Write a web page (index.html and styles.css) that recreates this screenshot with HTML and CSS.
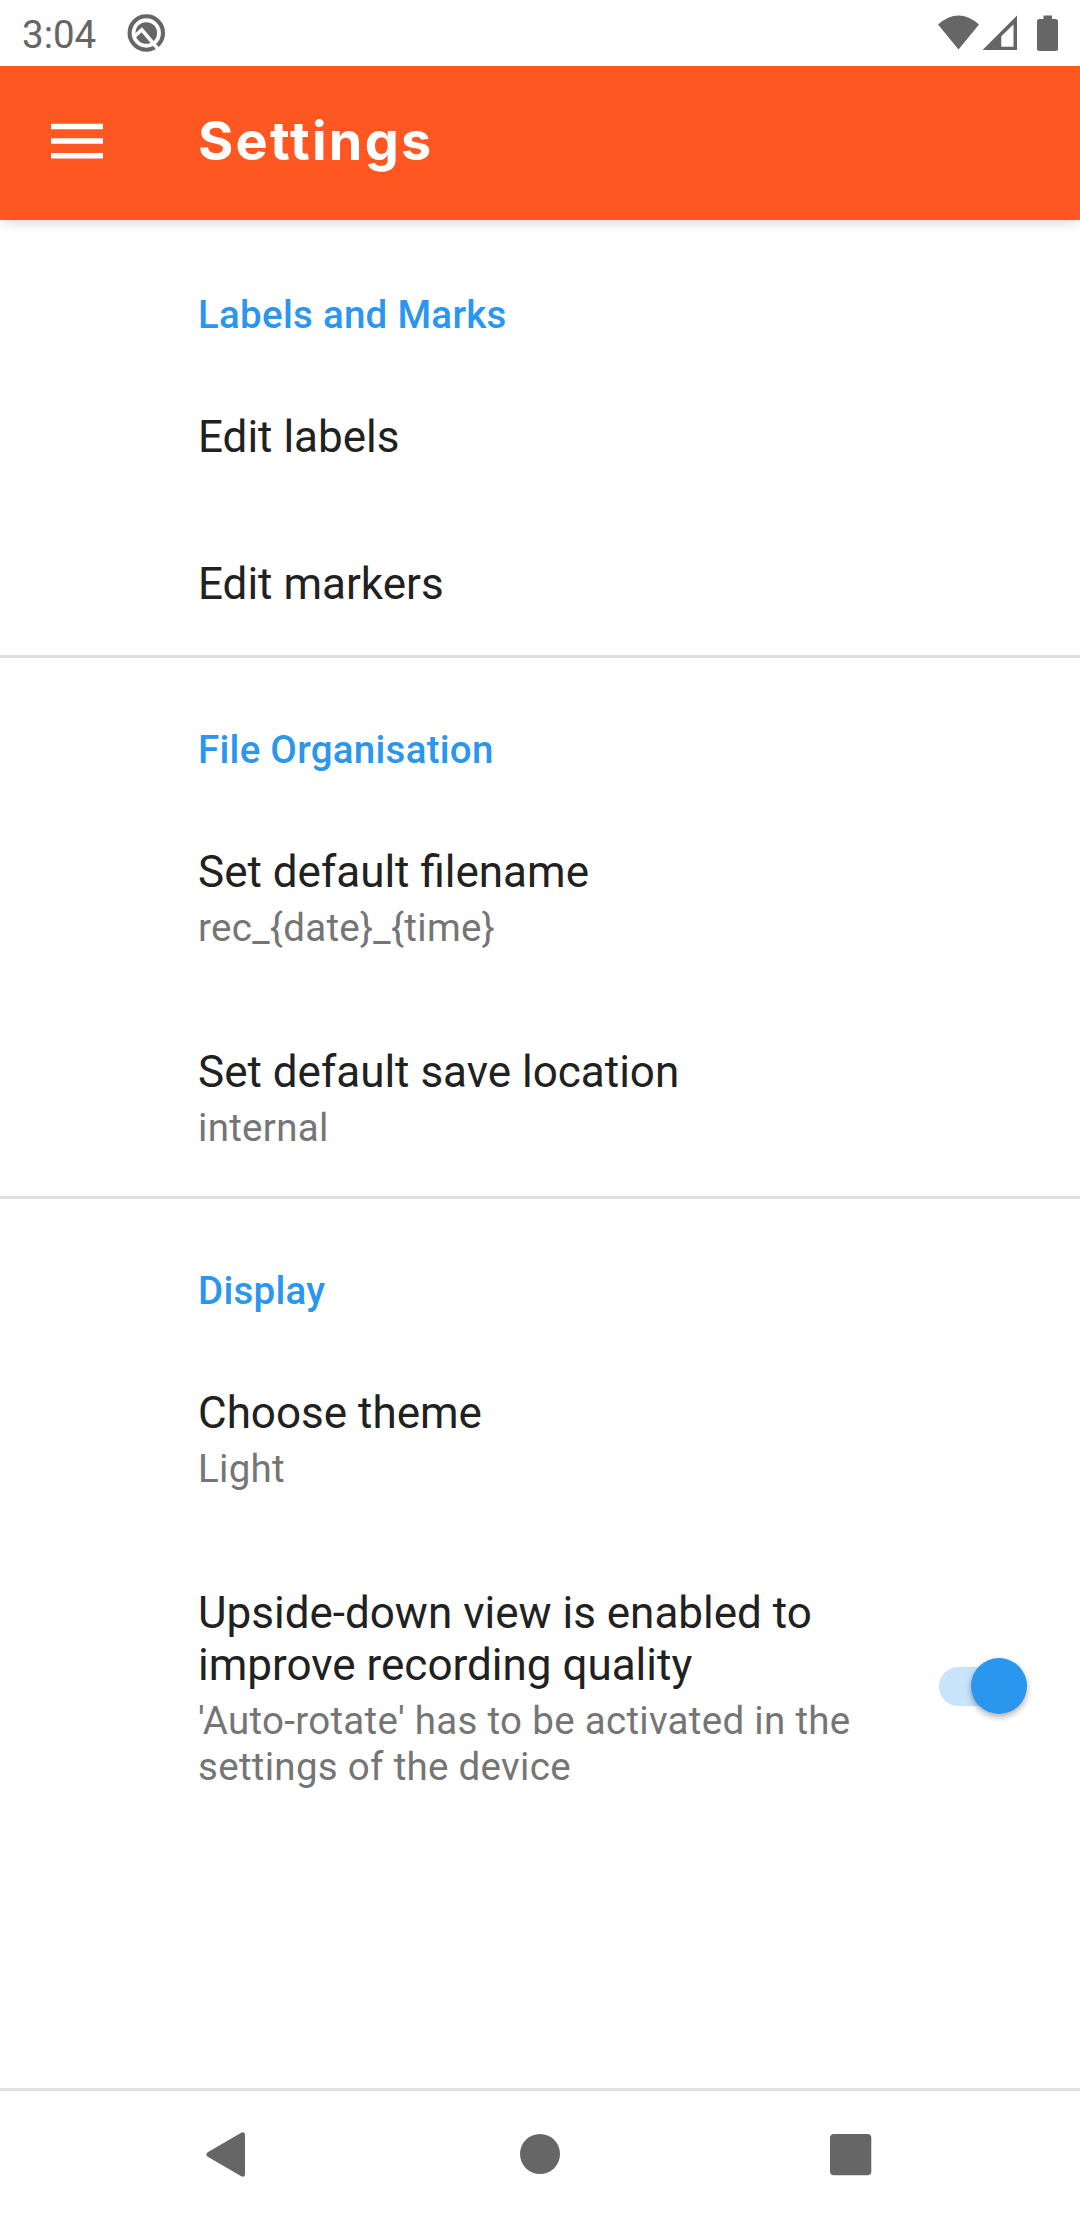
FILE: index.html
```html
<!DOCTYPE html>
<html lang="en">
<head>
<meta charset="utf-8">
<title>Settings</title>
<link rel="stylesheet" href="styles.css">
</head>
<body>
<div class="screen">
  <div class="status-bar">
    <span class="clock">3:04</span>
    <svg class="q-icon" width="40" height="40" viewBox="0 0 40 40">
      <circle cx="20.300" cy="20" r="16.700" fill="none" stroke="#666" stroke-width="4.100"/>
      <circle cx="20.300" cy="20" r="10.800" fill="#666"/>
      <path d="M8.800 23 15.800 16.800 32.200 36.200" fill="none" stroke="#fff" stroke-width="3.600"/>
    </svg>
    <svg class="system-icons" width="122" height="38" viewBox="0 0 122 38" fill="#666">
      <path d="M0 9.500Q20.500 -8.500 41 9.500L20.500 34.500Z"/>
      <path fill-rule="evenodd" d="M44.500 35 79 .5V35ZM63.300 31.800H75.500V9.500L63.300 21.300Z"/>
      <path d="M105.500 .5H114V4H117.500Q120 4 120 6.500V33.500Q120 36 117.500 36H101.500Q99 36 99 33.500V6.500Q99 4 101.500 4H105.500Z"/>
    </svg>
  </div>
  <header class="app-bar">
    <svg class="menu-icon" width="52" height="36" viewBox="0 0 52 36" fill="#fff">
      <path d="M0 .7H52V6.300H0ZM0 15.200H52V20.800H0ZM0 29.900H52V35.500H0Z"/>
    </svg>
    <h1 class="app-title">Settings</h1>
  </header>
  <main class="settings">
    <section class="group">
      <h2 class="group-title">Labels and Marks</h2>
      <div class="item"><div class="item-title">Edit labels</div></div>
      <div class="item"><div class="item-title">Edit markers</div></div>
    </section>
    <section class="group">
      <h2 class="group-title">File Organisation</h2>
      <div class="item">
        <div class="item-title">Set default filename</div>
        <div class="item-summary">rec_{date}_{time}</div>
      </div>
      <div class="item">
        <div class="item-title">Set default save location</div>
        <div class="item-summary">internal</div>
      </div>
    </section>
    <section class="group">
      <h2 class="group-title">Display</h2>
      <div class="item">
        <div class="item-title">Choose theme</div>
        <div class="item-summary">Light</div>
      </div>
      <div class="switch-row">
        <div class="item">
          <div class="item-title">Upside-down view is enabled to<br>improve recording quality</div>
          <div class="item-summary">'Auto-rotate' has to be activated in the<br>settings of the device</div>
        </div>
        <div class="switch"><div class="thumb"></div></div>
      </div>
    </section>
  </main>
  <nav class="nav-bar">
    <svg class="nav-icon" width="48" height="48" viewBox="0 0 48 48"><path d="M7 24.500 40.500 4.800V44.200Z" fill="#666" stroke="#666" stroke-width="5" stroke-linejoin="round"/></svg>
    <svg class="nav-icon" width="48" height="48" viewBox="0 0 48 48"><circle cx="24" cy="24" r="20" fill="#666"/></svg>
    <svg class="nav-icon" width="48" height="48" viewBox="0 0 48 48"><rect x="0" y="4" width="41.300" height="41.300" rx="4" fill="#666"/></svg>
  </nav>
</div>
</body>
</html>
```
FILE: styles.css
```css
* {
  box-sizing: border-box;
}

body {
  margin: 0;
  background: #fff;
  font-family: Roboto, sans-serif;
}

.screen {
  display: flex;
  flex-direction: column;
  width: 1080px;
  height: 2220px;
  overflow: hidden;
}

.status-bar {
  display: flex;
  align-items: flex-start;
  height: 66px;
  padding: 12px 22px 0;
  color: #666;
}

.clock {
  width: 104px;
  font-size: 38.5px;
  line-height: 45px;
}

.q-icon {
  margin-top: 1px;
}

.system-icons {
  margin: 3px -2px 0 auto;
}

.app-bar {
  display: flex;
  align-items: center;
  flex: none;
  height: 154px;
  padding: 0 51px;
  background: #ff5722;
  box-shadow: 0 7px 10px -3px rgba(0, 0, 0, 0.13);
}

.menu-icon {
  margin-top: -4px;
}

.app-title {
  margin: -5px 0 0 95px;
  color: #fff;
  font-family: Inter, sans-serif;
  font-size: 54px;
  font-weight: 700;
  line-height: 66px;
  letter-spacing: 2.2px;
}

.settings {
  flex: 1;
}

.group {
  border-top: 3px solid #e0e0e0;
}

.group:first-child {
  border-top-color: transparent;
}

.group-title {
  margin: 0;
  padding: 69px 0 23px 198px;
  color: #2b96ee;
  font-size: 38.5px;
  font-weight: 500;
  line-height: 46px;
  letter-spacing: 0.27px;
}

.item {
  padding: 50px 0 45px 198px;
}

.item-title {
  color: #212121;
  font-size: 44px;
  line-height: 52px;
}

.item-summary {
  margin-top: 7px;
  color: #757575;
  font-size: 38.5px;
  line-height: 46px;
  letter-spacing: 0.3px;
}

.switch-row {
  display: flex;
  align-items: center;
  justify-content: space-between;
  padding-right: 53px;
}

.switch {
  display: flex;
  align-items: center;
  justify-content: flex-end;
  width: 88px;
  height: 39px;
  border-radius: 20px;
  background: #c8e3fa;
}

.thumb {
  flex: none;
  width: 56px;
  height: 56px;
  border-radius: 50%;
  background: #2b96ee;
  box-shadow: 0 3px 6px rgba(0, 0, 0, 0.32);
}

.nav-bar {
  display: flex;
  align-items: center;
  justify-content: space-between;
  height: 132px;
  padding: 0 202px 3px;
  border-top: 3px solid #e0e0e0;
}
```
